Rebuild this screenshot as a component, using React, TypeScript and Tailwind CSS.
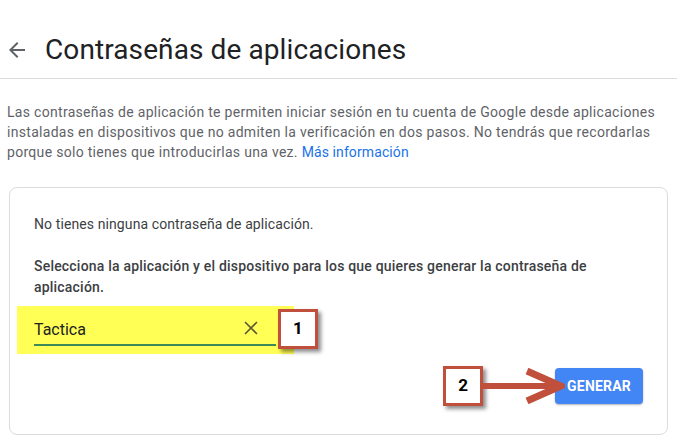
import React from "react";

const NumberTag = ({ n }: { n: string }) => (
  <div className="relative flex h-[40px] w-[40px] items-center justify-center border-[3px] border-[#c0503c] bg-white text-[17px] font-bold text-black shadow-[3px_3px_4px_rgba(0,0,0,0.45)]">
    {n}
  </div>
);

export default function App() {
  return (
    <div className="h-[437px] w-[677px] overflow-hidden bg-white font-['Roboto',_'Liberation_Sans',_sans-serif]">
      <header className="flex h-[79px] items-center border-b border-[#dadce0] pl-[5px] pt-[21px]">
        <svg width="24" height="24" viewBox="0 0 24 24" className="text-[#5f6368]">
          <path
            d="M20 11H7.83l5.59-5.59L12 4l-8 8 8 8 1.41-1.41L7.83 13H20v-2z"
            fill="currentColor"
          />
        </svg>
        <h1 className="ml-[16px] text-[28px] font-normal tracking-[0.1px] text-[#202124]">
          Contraseñas de aplicaciones
        </h1>
      </header>

      <p className="mt-[23px] pl-[7px] pr-[20px] text-[14px] leading-[20px] tracking-[0.3px] text-[#5f6368]">
        Las contraseñas de aplicación te permiten iniciar sesión en tu cuenta de Google desde aplicaciones
        instaladas en dispositivos que no admiten la verificación en dos pasos. No tendrás que recordarlas
        porque solo tienes que introducirlas una vez.{" "}
        <a className="tracking-[0.1px] text-[#1a73e8]">Más información</a>
      </p>

      <section className="mx-[9px] mt-[25px] h-[248px] rounded-[8px] border border-[#dadce0] px-[24px] pt-[26px]">
        <p className="text-[14px] leading-[20px] tracking-[0.1px] text-[#3c4043]">
          No tienes ninguna contraseña de aplicación.
        </p>

        <p className="mt-[22px] w-[590px] text-[14px] font-medium leading-[21px] tracking-[0.2px] text-[#3c4043]">
          Selecciona la aplicación y el dispositivo para los que quieres generar la contraseña de
          aplicación.
        </p>

        <div className="mt-[8px] flex items-start">
          <div className="-ml-[17px] flex h-[48px] w-[277px] items-end bg-[#ffff55] pb-[8px] pl-[17px]">
            <div className="flex w-[242px] items-center justify-between border-b-2 border-[#3b8a57] pb-[2px]">
              <span className="text-[16px] leading-[24px] text-[#202124]">Tactica</span>
              <svg width="14" height="14" viewBox="0 0 14 14" className="mr-[18px] mb-[4px]">
                <path d="M1 1L13 13M13 1L1 13" stroke="#5a5a3a" strokeWidth="1.6" />
              </svg>
            </div>
          </div>
          <div className="-ml-[16px] mt-[3px]">
            <NumberTag n="1" />
          </div>
        </div>

        <div className="mt-[12px] flex items-center justify-end">
          <NumberTag n="2" />
          <svg width="82" height="36" viewBox="0 0 82 36" className="relative z-10 -mr-[10px]">
            <path d="M0 18H76" stroke="#c0503c" strokeWidth="6" />
            <path d="M44 3L78 18L44 33" stroke="#c0503c" strokeWidth="7" fill="none" strokeLinejoin="miter" />
          </svg>
          <button className="h-[36px] rounded-[4px] bg-[#4285f4] px-[12px] text-[14px] font-bold tracking-[0.2px] text-white shadow-[0_1px_2px_rgba(0,0,0,0.3)]">
            GENERAR
          </button>
        </div>
      </section>
    </div>
  );
}
